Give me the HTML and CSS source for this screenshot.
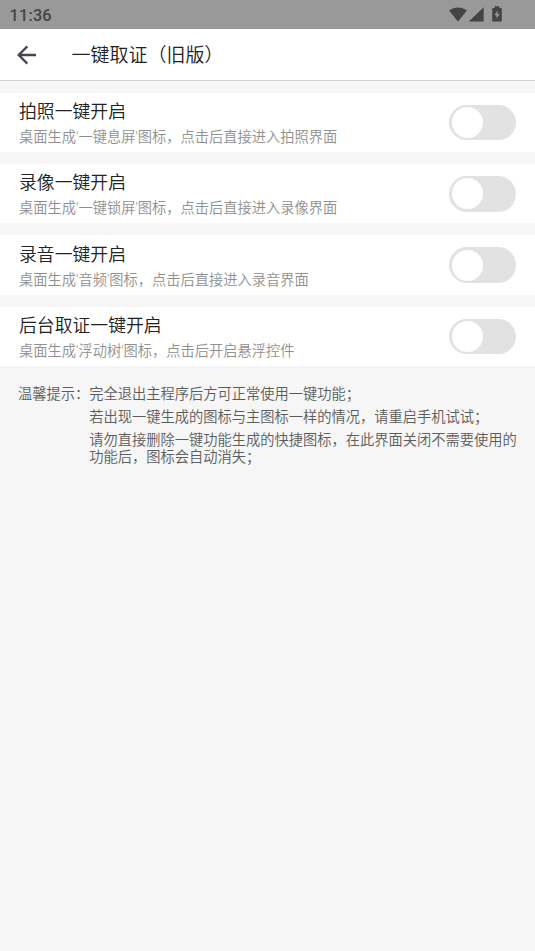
FILE: index.html
```html
<!DOCTYPE html>
<html lang="zh-CN">
<head>
    <meta charset="UTF-8">
    <meta name="viewport" content="width=device-width, initial-scale=1.0">
    <title>一键取证（旧版）</title>
    <link rel="stylesheet" href="styles.css">
</head>
<body>
    <div class="status-bar">
        <span class="time">11:36</span>
        <svg class="status-icons" width="54" height="18" viewBox="0 0 54 18">
            <path d="M0.2 4.700C5.200 0.300 12.800 0.300 17.800 4.700L9 15.600Z"/>
            <path d="M34.700 1.200V15.600H19.800Z"/>
            <path fill-rule="evenodd" d="M45.600 0.300h4.800v1.600h1.600q0.800 0 0.800 0.800V14.800q0 0.800-0.800 0.800h-8q-0.800 0-0.800-0.800V2.700q0-0.800 0.800-0.800h1.600zM48.600 4.400L45.400 9.300h2.100v3.500l3.200-4.900h-2.100z"/>
        </svg>
    </div>

    <header class="title-bar">
        <button type="button" class="back" aria-label="返回">
            <svg width="20" height="20" viewBox="0 0 20 20">
                <path d="M19 10H2M10.300 1.400L1.700 10l8.600 8.600"/>
            </svg>
        </button>
        <h1>一键取证（旧版）</h1>
    </header>

    <main>
        <section class="settings">
            <div class="setting">
                <div class="setting-text">
                    <h2>拍照一键开启</h2>
                    <p>桌面生成'一键息屏'图标，点击后直接进入拍照界面</p>
                </div>
                <label class="switch">
                    <input type="checkbox" aria-label="拍照一键开启">
                    <span class="knob"></span>
                </label>
            </div>
            <div class="setting">
                <div class="setting-text">
                    <h2>录像一键开启</h2>
                    <p>桌面生成'一键锁屏'图标，点击后直接进入录像界面</p>
                </div>
                <label class="switch">
                    <input type="checkbox" aria-label="录像一键开启">
                    <span class="knob"></span>
                </label>
            </div>
            <div class="setting">
                <div class="setting-text">
                    <h2>录音一键开启</h2>
                    <p>桌面生成'音频'图标，点击后直接进入录音界面</p>
                </div>
                <label class="switch">
                    <input type="checkbox" aria-label="录音一键开启">
                    <span class="knob"></span>
                </label>
            </div>
            <div class="setting">
                <div class="setting-text">
                    <h2>后台取证一键开启</h2>
                    <p>桌面生成'浮动树'图标，点击后开启悬浮控件</p>
                </div>
                <label class="switch">
                    <input type="checkbox" aria-label="后台取证一键开启">
                    <span class="knob"></span>
                </label>
            </div>
        </section>

        <section class="tips">
            <span class="tips-label">温馨提示：</span>
            <div class="tips-list">
                <p>完全退出主程序后方可正常使用一键功能；</p>
                <p>若出现一键生成的图标与主图标一样的情况，请重启手机试试；</p>
                <p>请勿直接删除一键功能生成的快捷图标，在此界面关闭不需要使用的功能后，图标会自动消失；</p>
            </div>
        </section>
    </main>
</body>
</html>
```

FILE: styles.css
```css
* {
    box-sizing: border-box;
}

body {
    font-family: Roboto, 'Noto Sans CJK SC', sans-serif;
    font-weight: 350;
    margin: 0;
    min-height: 100vh;
    background-color: #f6f6f6;
    color: #222;
}

h1, h2, p {
    margin: 0;
    font-weight: inherit;
}

.status-bar {
    display: flex;
    align-items: center;
    justify-content: space-between;
    height: 28.5px;
    padding: 0 32px 0 9.5px;
    background-color: #999;
}

.time {
    padding-top: 2px;
    font-size: 16.3px;
    font-weight: 500;
    letter-spacing: 0.2px;
    color: #444;
}

.status-icons {
    margin-top: 2px;
    fill: #444;
}

.title-bar {
    display: flex;
    align-items: center;
    height: 52px;
    padding-left: 17px;
    background-color: white;
    border-bottom: 1px solid #d3d3d3;
}

.back {
    display: flex;
    margin-right: 34.5px;
    padding: 1px 0 0;
    border: none;
    background: none;
}

.back svg {
    fill: none;
    stroke: #43474d;
    stroke-width: 2.3;
}

.title-bar h1 {
    padding-top: 3px;
    font-size: 19px;
    line-height: 28px;
}

.settings {
    display: flex;
    flex-direction: column;
    gap: 11.9px;
    padding-top: 12.3px;
}

.setting {
    display: flex;
    align-items: center;
    justify-content: space-between;
    height: 59.4px;
    padding: 0 19px;
    background-color: white;
}

.setting-text {
    padding-top: 4px;
}

.setting h2 {
    font-size: 17.83px;
    line-height: 26px;
}

.setting p {
    font-size: 14.26px;
    line-height: 25px;
    color: #909090;
}

.switch {
    display: flex;
    width: 66.8px;
    height: 35.6px;
    padding: 2.3px 2.6px;
    border-radius: 18px;
    background-color: #e2e2e2;
}

.switch input {
    display: none;
}

.knob {
    width: 31px;
    height: 31px;
    border-radius: 50%;
    background-color: white;
}

.switch input:checked + .knob {
    margin-left: auto;
}

.tips {
    display: flex;
    padding: 20px 17px 0 18px;
    font-size: 14.26px;
    line-height: 17px;
    color: #5c5c5c;
}

.tips-label {
    flex: none;
}

.tips-list {
    display: flex;
    flex-direction: column;
    gap: 6px;
}
```
